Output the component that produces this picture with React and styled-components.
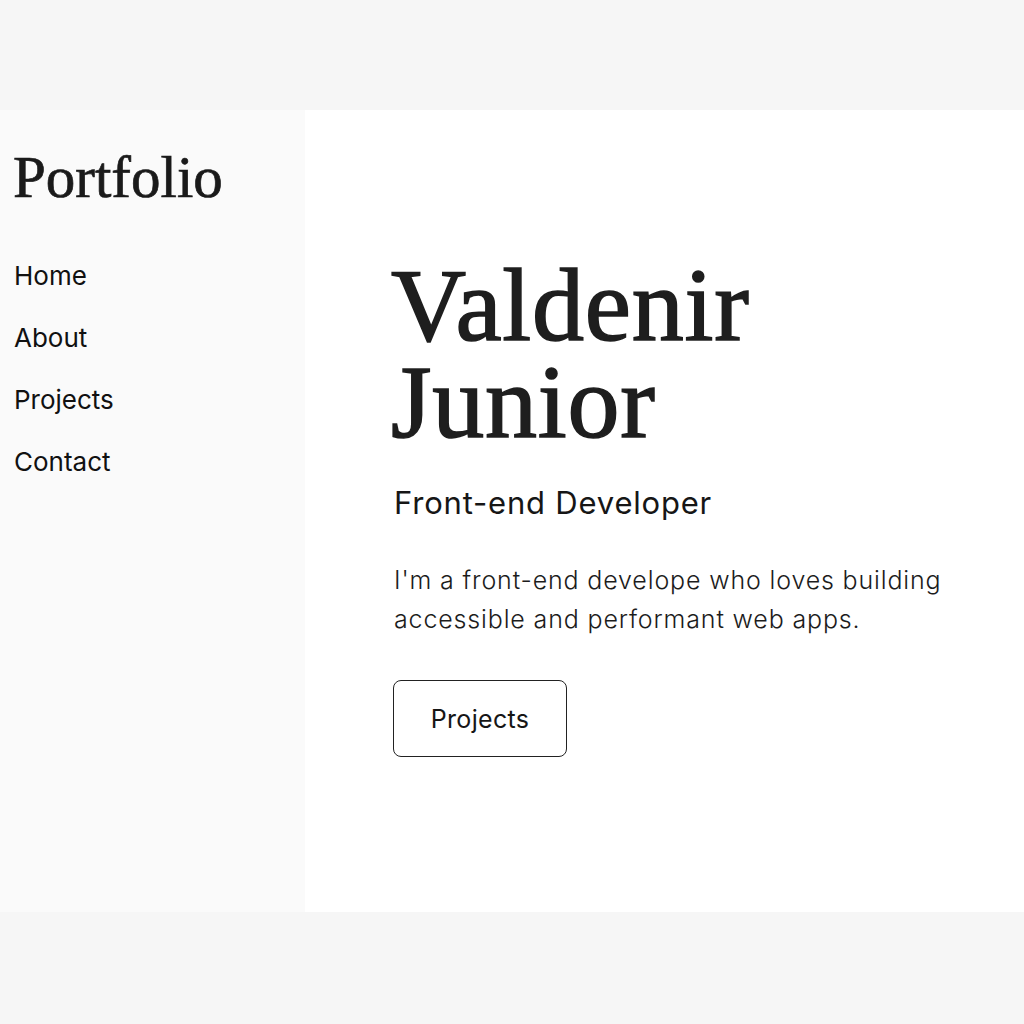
import React from "react";
import styled, { createGlobalStyle } from "styled-components";

const GlobalStyle = createGlobalStyle`
  html, body {
    margin: 0;
    padding: 0;
    background: #f6f6f6;
  }
  body {
    font-family: Inter, "Noto Sans", "Liberation Sans", sans-serif;
    color: #1c1c1c;
  }
`;

const Page = styled.div`
  display: flex;
  flex-direction: column;
  width: 1024px;
  height: 1024px;
  background: #f6f6f6;
`;

const Band = styled.div`
  height: ${(p) => p.$height}px;
  flex-shrink: 0;
`;

const Layout = styled.div`
  display: grid;
  grid-template-columns: 305px 1fr;
  height: 802px;
`;

const Sidebar = styled.aside`
  background: #fafafa;
  padding: 38px 0 0 13px;
`;

const Logo = styled.div`
  font-family: "Liberation Serif", "Times New Roman", serif;
  font-size: 59px;
  line-height: 1;
  color: #1a1a1a;
  -webkit-text-stroke: 0.7px #1a1a1a;
  margin-bottom: 54px;
`;

const Nav = styled.nav`
  display: flex;
  flex-direction: column;
  gap: 32px;
`;

const NavLink = styled.a`
  font-size: 26px;
  line-height: 30px;
  color: #111;
  text-decoration: none;
  padding-left: 1px;
`;

const Main = styled.main`
  background: #ffffff;
  padding: 146px 0 0 88px;
`;

const Name = styled.h1`
  margin: 0 0 0 -2px;
  font-family: "Liberation Serif", "Times New Roman", serif;
  font-weight: 400;
  font-size: 104px;
  line-height: 97px;
  letter-spacing: 0.8px;
  color: #1e1e1e;
  -webkit-text-stroke: 1.6px #1e1e1e;
`;

const Role = styled.h2`
  margin: 35px 0 0 1px;
  font-size: 31px;
  font-weight: 400;
  line-height: 36px;
  letter-spacing: 0.8px;
  color: #161616;
`;

const Intro = styled.p`
  margin: 40px 0 0 1px;
  font-size: 25px;
  font-weight: 300;
  line-height: 39px;
  letter-spacing: 0.85px;
  color: #1c1c1c;
  max-width: 600px;
`;

const Button = styled.button`
  margin-top: 41px;
  width: 174px;
  height: 77px;
  border: 1.5px solid #222;
  border-radius: 8px;
  background: #fff;
  font-family: inherit;
  font-size: 25px;
  letter-spacing: 0.3px;
  color: #161616;
  cursor: pointer;
`;

const App = () => (
  <>
    <GlobalStyle />
    <Page>
      <Band $height={110} />
      <Layout>
        <Sidebar>
          <Logo>Portfolio</Logo>
          <Nav>
            <NavLink href="#home">Home</NavLink>
            <NavLink href="#about">About</NavLink>
            <NavLink href="#projects">Projects</NavLink>
            <NavLink href="#contact">Contact</NavLink>
          </Nav>
        </Sidebar>
        <Main>
          <Name>
            Valdenir
            <br />
            Junior
          </Name>
          <Role>Front-end Developer</Role>
          <Intro>
            I'm a front-end develope who loves building
            <br />
            accessible and performant web apps.
          </Intro>
          <Button>Projects</Button>
        </Main>
      </Layout>
      <Band $height={112} />
    </Page>
  </>
);

export default App;
